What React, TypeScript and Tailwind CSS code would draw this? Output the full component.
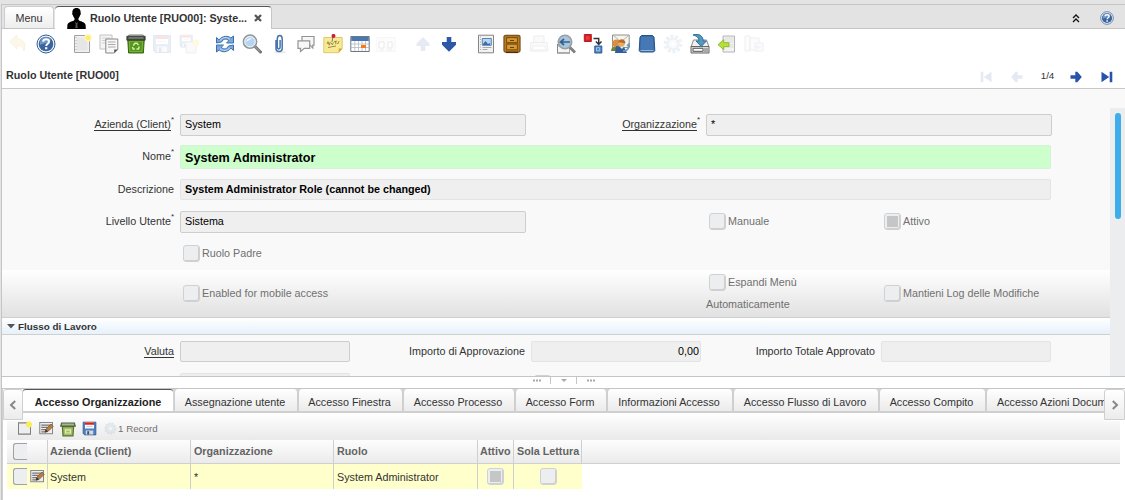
import React from 'react';

type Children = { children?: React.ReactNode };

function Icon({ children, dim, size = 20 }: Children & { dim?: boolean; size?: number }) {
  return (
    <svg width={size} height={size} viewBox="0 0 20 20" fill="none" className={dim ? 'shrink-0 opacity-12' : 'shrink-0'}>
      {children}
    </svg>
  );
}

function Help({ size = 20 }: { size?: number }) {
  return (
    <Icon size={size}>
      <circle cx="10" cy="10" r="9" fill="#f4f7fb" stroke="#315b91" strokeWidth="1" />
      <circle cx="10" cy="10" r="7.3" fill="#38659f" />
      <path d="M4 8a6 6 0 0 1 11-2c-2 3-6 3-11 5z" fill="#7296c4" />
      <path d="M7.2 7.6C7.3 4.6 13 4.6 13 7.7c0 2-2.8 2-2.8 4.2" stroke="#fff" strokeWidth="2" />
      <path d="M9.1 13.2h2.2v2.1H9.1z" fill="#fff" />
    </Icon>
  );
}

function Floppy() {
  return (
    <>
      <path d="M1.5 1.5h17v17h-15l-2-2z" fill="#4d7fc0" stroke="#2c5591" />
      <path d="M4 2h12v8H4z" fill="#fff" />
      <path d="M4 2h12v3H4z" fill="#e02020" />
      <path d="M6 7.5h8" stroke="#bbb" />
      <path d="M5 12.5h10V18H5z" fill="#d5d8dc" />
      <path d="M7 13.5h2.5V18H7z" fill="#31537f" />
    </>
  );
}

function Bin() {
  return (
    <Icon>
      <path d="M1.8 6h16.4l-.8 13H2.6z" fill="#57961c" stroke="#36630f" />
      <path d="M3.4 7.2h13.2L16 17.6H4z" stroke="#82bb43" strokeWidth=".8" />
      <path d="M2 2.2 3 .8h14l1 1.4z" fill="#c6cbbc" stroke="#777b70" strokeWidth=".6" />
      <path d="M.8 2.2h18.4v4H.8z" fill="#474b43" stroke="#32352f" strokeWidth=".7" />
      <path d="M2.5 4h15" stroke="#8a9183" strokeWidth="1.2" />
      <path d="m7.2 11.5 1.8-2.3h2l1.5 2M13.2 12.5l-.7 2.5h-2M8.8 15H7.2l-.8-2" stroke="#d4efae" strokeWidth="1.4" />
    </Icon>
  );
}

function Bubble({ d }: { d: string }) {
  return <path d={d} fill="#f7f7f7" stroke="#949494" strokeWidth="1.2" />;
}

const Gap = () => <div className="w-[9.4px] shrink-0" />;
const Slot = ({ children }: Children) => <div className="flex h-5 w-[26.83px] shrink-0 items-center justify-center">{children}</div>;

function Toolbar() {
  return (
    <div className="flex h-[34px] shrink-0 items-center pb-[5px] pl-[3.4px] pr-2">
      <Slot>
        <Icon dim>
          <path d="M1 7.5 8 1v4c6 0 9 3 7 12-1-4-3-5.5-7-5.5V15z" fill="#eac53a" stroke="#c79a14" />
        </Icon>
      </Slot>
      <Slot><Help /></Slot>
      <Gap />
      <Slot>
        <Icon>
          <path d="M2.5 1.5h15v17h-15z" fill="#f1f1f1" stroke="#a2a2a2" />
          <path d="M4.5 3.5h11v13h-11z" fill="#e6e6e6" />
          <path d="M4 3v14" stroke="#aaa" strokeDasharray="1 2" />
          <circle cx="16" cy="3.8" r="3.8" fill="#fff7ab" />
          <circle cx="16" cy="3.8" r="2" fill="#fbe14c" />
          <circle cx="16" cy="3.8" r=".8" fill="#fff" />
        </Icon>
      </Slot>
      <Slot>
        <Icon>
          <path d="M1 1h12v14H1z" fill="#f5f5f5" stroke="#c2c2c2" />
          <path d="M3 4h8M3 6.5h8M3 9h8" stroke="#d0d0d0" />
          <path d="M6.8 5h12v10.5l-3.5 3.5H6.8z" fill="#f7f7f7" stroke="#888" />
          <path d="M9 8h7.5M9 10.5h7.5M9 13h7.5" stroke="#aaa" />
          <path d="M15.2 19v-3.5h3.6z" fill="#555" />
        </Icon>
      </Slot>
      <Slot><Bin /></Slot>
      <Slot><Icon dim><Floppy /></Icon></Slot>
      <Slot>
        <Icon dim>
          <g transform="scale(.72)"><Floppy /></g>
          <path d="M7 8h10v11H7z" fill="#ddd" stroke="#888" />
          <circle cx="17" cy="9" r="3.5" fill="#f3d41c" />
        </Icon>
      </Slot>
      <Gap />
      <Slot>
        <Icon>
          <path d="M1.5 9V3.5L4 5.8C8 1.5 13 1.5 15.8 4L18.5 2v7h-7l2.3-2.3C11 4 8 5 6.5 8z" fill="#7ba7da" stroke="#3a70af" strokeWidth="1" />
          <path d="M18.5 11v5.5L16 14.2C12 18.5 7 18.5 4.2 16L1.5 18v-7h7l-2.3 2.3C9 16 12 15 13.5 12z" fill="#7ba7da" stroke="#3a70af" strokeWidth="1" />
          <path d="M5 6.4C8 3 12 2.8 15 5.2M15 13.6C12 17 8 17.2 5 14.8" stroke="#c4dcf4" strokeWidth="1" />
        </Icon>
      </Slot>
      <Slot>
        <Icon>
          <path d="m12.5 12 6 6" stroke="#707070" strokeWidth="3" strokeLinecap="round" />
          <path d="m13 12.5 5 5" stroke="#b4b4b4" strokeWidth="1" />
          <circle cx="8" cy="7.7" r="6.6" fill="#b7d4f2" stroke="#959595" strokeWidth="1.5" />
          <circle cx="8" cy="7.7" r="5.2" stroke="#eff6fd" />
          <path d="M4.2 8c.3-3 3-4.5 6-3.6-2 1-4 2-6 3.6z" fill="#eef6ff" />
        </Icon>
      </Slot>
      <Slot>
        <Icon>
          <ellipse cx="11" cy="18.3" rx="6" ry="1" fill="#e8e8e8" />
          <path d="M7 6v8.5c0 4 6.2 4 6.2 0V5c0-4.7-4.9-4.7-4.9 0v8.3c0 2.1 2.8 2.1 2.8 0V6" stroke="#4674b0" strokeWidth="1.5" />
        </Icon>
      </Slot>
      <Slot>
        <Icon>
          <Bubble d="M6 2.5h12v8.7h-1.2V14L14 11.2H6z" />
          <Bubble d="M2 6.8h11.7v7.6H8.3l-3.8 3v-3H2z" />
        </Icon>
      </Slot>
      <Slot>
        <Icon>
          <path d="M.8 3.5h18.4v11l-3.5 4.2H.8z" fill="#f8ea94" stroke="#e0c868" />
          <path d="M15.7 18.7v-4.2h3.5z" fill="#cba83b" />
          <path d="m4 10 1-2.3 1.3 3.5 1-3.3M8.2 8.8l1.2 2 1-2.3M11 7.7l3-.6m-1.5 0 .4 3.2M14 9l1 .7 1-2.5M5 13.5l8-1.5" stroke="#8f803c" strokeWidth=".9" />
          <path d="m10 2.8-1 5" stroke="#777" />
          <circle cx="10.5" cy="1.9" r="2" fill="#c82035" />
        </Icon>
      </Slot>
      <Slot>
        <Icon>
          <path d="M.8 2.5h18.4v15H.8z" fill="#fff" stroke="#6b7785" />
          <path d="M1.2 3h17.6v4H1.2z" fill="#4b77b0" />
          <path d="M1 10h18M1 13.5h18M4.8 7v10M8.5 7v10M12 7v10M15.5 7v10" stroke="#b5bbc3" strokeWidth=".8" />
          <path d="M11 11h5v3h-5z" fill="#f47b16" />
        </Icon>
      </Slot>
      <Slot>
        <Icon dim>
          <path d="M.8 3.5h18.4v14H.8z" fill="#eee" stroke="#999" strokeWidth=".6" />
          <path d="M3 8h5v6H3zM12 8h4v6h-4z" fill="#fff" stroke="#555" />
          <path d="M4 16h4m3 0h5" stroke="#777" />
        </Icon>
      </Slot>
      <Gap />
      <Slot><Icon dim><path d="M10 3 3.5 9.5V12h4.2v5h4.6v-5h4.2V9.5z" fill="#3458a8" /></Icon></Slot>
      <Slot><Icon><path d="M7.7 3h4.6v5h4.7v2.8L10 17.8 3 10.8V8h4.7z" fill="#2d58a8" /></Icon></Slot>
      <Gap />
      <Slot>
        <Icon>
          <path d="M2.5 1.2h15v17.6h-15z" fill="#f2f2f2" stroke="#858585" />
          <path d="M4.5 2.5v15" stroke="#aaa" strokeDasharray="1 1.5" />
          <path d="M6.3 4.5h9v6.8h-9z" fill="#b9d5ef" stroke="#5883b4" />
          <path d="m7 10 2.5-3 2.5 3 2-1v2H7z" fill="#3a6da9" />
          <path d="M6.5 13.5h9m-9 2h5" stroke="#aaa" />
        </Icon>
      </Slot>
      <Slot>
        <Icon>
          <rect x="2" y="1.5" width="16" height="16.5" rx="1.5" fill="#c08122" stroke="#7d531a" strokeWidth="1.3" />
          <path d="M4.5 3.7h11v5h-11zm0 6.5h11v5.6h-11z" fill="#d8982d" stroke="#80530f" strokeWidth="1.2" />
          <path d="M8 6.2h4m-4 7h4" stroke="#664211" strokeWidth="1.7" />
          <path d="M8 5.3h4m-4 7h4" stroke="#f2d175" strokeWidth=".7" />
          <path d="M4 18.5h12" stroke="#49300e" strokeWidth="1.2" />
        </Icon>
      </Slot>
      <Slot>
        <Icon dim>
          <path d="M5 9V2h10v7M2 8.5h16l1 8.5H1z" fill="#ddd" stroke="#777" />
          <path d="M4 12h12l1 4H3z" fill="#fff" stroke="#888" />
        </Icon>
      </Slot>
      <Slot>
        <Icon>
          <path d="M1.5 12h12v7h-12z" fill="#f5f5f5" stroke="#aaa" />
          <path d="M1.5 18V10M1 19h13" stroke="#888" />
          <path d="m13 12.5 6 6" stroke="#808080" strokeWidth="2.8" />
          <circle cx="9" cy="8" r="6.7" fill="#a9c5de" stroke="#999ea1" strokeWidth="1.6" />
          <path d="M14 8H5m3-3L4.5 8 8 11" stroke="#31638e" strokeWidth="1.7" />
        </Icon>
      </Slot>
      <Slot>
        <Icon>
          <path d="M1.3.5h7v7h-7z" fill="#d91b23" stroke="#b42020" />
          <path d="M3 2.2h3.5v3.5H3z" fill="#ee3a3c" />
          <path d="M10.5 4.5h5.2v5.7m-2.8-2.7 2.8 3 2.8-3" stroke="#333" strokeWidth="1.5" />
          <path d="M11.8 12h7v7h-7z" fill="#4a84be" stroke="#285f9c" />
          <path d="M13.5 13.7h3.2v3.2h-3.2z" stroke="#a6c7ea" />
        </Icon>
      </Slot>
      <Slot>
        <Icon>
          <path d="M2.5 1h16.7v12.5H2.5z" fill="#f4f4ef" stroke="#90928e" />
          <path d="m3 1 8 7 8-7" stroke="#b4b4ad" />
          <path d="M1 17c0-4 3-5 6-4l4 4z" fill="#6f842d" />
          <circle cx="6.5" cy="9.5" r="4" fill="#d98e43" />
          <path d="m6 12 8 1 3 6H5z" fill="#315d9b" />
          <path d="M9.5 12.5 12 15l2-2.5" fill="#eee" />
          <circle cx="11.5" cy="9.3" r="3.4" fill="#e4ad63" />
          <path d="M7.8 9c1-5 7-5 7.7 0-3 1-5-2-7.7 0z" fill="#b96c2b" />
          <path d="M13 17c4 0 6-2 6-6m-2 1 2-2 1 3" stroke="#6c9ac9" strokeWidth="1.7" />
        </Icon>
      </Slot>
      <Slot>
        <Icon>
          <path d="m3 3 1.5-1.5h11L17 3l.8 13.5-1.2 1.5H3.4l-1.2-1.5z" fill="#376ba9" stroke="#275386" />
          <path d="M4 3h12l.5 12.5h-13z" fill="#4578b4" />
          <path d="M3.5 16.5h13" stroke="#97b7d8" strokeWidth="1.2" />
        </Icon>
      </Slot>
      <Slot>
        <Icon dim>
          <circle cx="10" cy="10" r="7.7" stroke="#6f9ac4" strokeWidth="3.3" strokeDasharray="3 1.8" />
          <circle cx="10" cy="10" r="5.5" fill="#c7d9eb" stroke="#6f9ac4" strokeWidth="2" />
          <circle cx="10" cy="10" r="2" fill="#fff" />
        </Icon>
      </Slot>
      <Slot>
        <Icon>
          <path d="M3.5 6h13l2.5 7H1z" fill="#f0f0f0" stroke="#888" />
          <path d="M1 12.5h18V19H1z" fill="#ddd" stroke="#666" />
          <path d="M3 14.3h10v3H3z" fill="#fff" stroke="#555" />
          <path d="M15 14v4m2-4v4" stroke="#777" />
          <path d="M3 1c6-2 10 1 10.3 6h3l-5 5.5L6 7h3C9 4 7 2 3 1z" fill="#5597c0" stroke="#287398" />
        </Icon>
      </Slot>
      <Slot>
        <Icon>
          <path d="M6 2h11.5v16H6z" fill="#f3f3f3" stroke="#b4b4b4" />
          <path d="M7.5 4h9m-9 2h9m-9 2h9m-5 3h5m-5 2h5" stroke="#ddd" />
          <path d="M6.8 5.7v3H12v4H6.8v3L1 10.7z" fill="#b8df37" stroke="#92bb35" />
        </Icon>
      </Slot>
      <Slot>
        <Icon dim>
          <path d="M1 2h5v15H1zM6 4h9v12H6z" fill="#eee" stroke="#888" />
          <path d="M11 9h8v8h-8z" fill="#dce4ef" stroke="#7488a4" />
          <path d="M17 13h-5m2-2-2 2 2 2" stroke="#7488a4" />
        </Icon>
      </Slot>
    </div>
  );
}

function Arrow({ left, end, dim }: { left?: boolean; end?: boolean; dim?: boolean }) {
  return (
    <svg width="12" height="12" viewBox="0 0 12 12" className={dim ? 'opacity-12' : ''}>
      <g transform={left ? 'translate(12 0) scale(-1 1)' : undefined} fill="#2853ad">
        {end ? <path d="M.5.7 8.2 6 .5 11.3zM8.7.7h2.6v10.6H8.7z" /> : <path d="M.5 4.3h4.8V.8h2l4.5 5.2-4.5 5.2h-2V7.7H.5z" />}
      </g>
    </svg>
  );
}

function Label({ text, req, link, className = '' }: { text: string; req?: boolean; link?: boolean; className?: string }) {
  return (
    <div className={`flex shrink-0 items-center justify-end text-[#333] ${className}`}>
      <span className={link ? 'border-b border-[#333] leading-[11px]' : 'pb-[2px] leading-[12px]'}>{text}</span>
      {req && <span className="-mt-2.5 text-[8px] leading-[8px]">*</span>}
    </div>
  );
}

function Box({ children, strong, className = '' }: Children & { strong?: boolean; className?: string }) {
  return (
    <div className={`flex shrink-0 items-center rounded-[2px] border bg-[#efefef] px-1 pb-[2px] text-black ${strong ? 'border-[#cdcdcd]' : 'border-[#e4e4e4]'} ${className}`}>
      {children}
    </div>
  );
}

function Check({ on }: { on?: boolean }) {
  return (
    <span className="inline-flex size-[17px] shrink-0 items-center justify-center rounded-[3px] border border-[#cfd1d3] bg-[#eceef0] shadow-[inset_-1px_-1px_0_#cfcfcf]">
      {on && <span className="size-[11px] bg-[#c5c6c8]" />}
    </span>
  );
}

function CheckField({ label, on, className = '' }: { label: string; on?: boolean; className?: string }) {
  return (
    <div className={`flex shrink-0 items-center gap-[2px] text-[#707070] ${className}`}>
      <Check on={on} />
      <span className="pb-[2px]">{label}</span>
    </div>
  );
}

function Form() {
  return (
    <div className="flex h-[287px] shrink-0 overflow-hidden bg-[#f9f9f9]">
      <div className="flex w-[1108px] shrink-0 flex-col">
        <div className="mt-[25px] flex h-[22px] shrink-0">
          <Label text="Azienda (Client)" req link className="w-[172px]" />
          <Box strong className="ml-[6px] w-[346px]">System</Box>
          <Label text="Organizzazione" req link className="w-[174px]" />
          <Box strong className="ml-[6px] w-[346px]">*</Box>
        </div>
        <div className="mt-[9px] flex h-[24px] shrink-0">
          <Label text="Nome" req className="w-[172px]" />
          <div className="ml-[6px] flex w-[871px] items-center rounded-[2px] border border-[#d9efd9] bg-[#ccffcc] px-1 pt-px text-[12.6px] font-bold text-black">System Administrator</div>
        </div>
        <div className="mt-[10px] flex h-[21px] shrink-0">
          <Label text="Descrizione" className="w-[172px]" />
          <Box className="ml-[6px] w-[871px] font-bold">System Administrator Role (cannot be changed)</Box>
        </div>
        <div className="mt-[11px] flex h-[22px] shrink-0">
          <Label text="Livello Utente" req className="w-[172px]" />
          <Box strong className="ml-[6px] w-[346px]">Sistema</Box>
          <CheckField label="Manuale" className="ml-[183px] w-[175px] pb-px" />
          <CheckField label="Attivo" on className="pb-px" />
        </div>
        <div className="mt-[12px] flex h-[17px] shrink-0">
          <CheckField label="Ruolo Padre" className="ml-[181px]" />
        </div>
        <div className="mt-[8px] flex h-[48px] shrink-0 items-center border-b border-[#cfcfcf] bg-linear-to-b from-white to-[#e1e1e1]">
          <CheckField label="Enabled for mobile access" className="ml-[181px] w-[523px]" />
          <div className="w-[178px] shrink-0 pb-[3px] text-[#707070]">
            <CheckField label="Espandi Menù" className="pl-[3px]" />
            <div className="pt-[7px] leading-[12px]">Automaticamente</div>
          </div>
          <CheckField label="Mantieni Log delle Modifiche" />
        </div>
        <div className="flex h-[17px] shrink-0 items-center border-b border-[#cfcfcf] bg-linear-to-b from-white to-[#e6f1fb] pl-[5px] text-[9.85px] font-bold text-[#333]">
          <svg width="8" height="5" viewBox="0 0 8 5" className="mr-[3px]"><path d="M0 0h8L4 4.5z" fill="#555" /></svg>
          <span className="pt-[2px]">Flusso di Lavoro</span>
        </div>
        <div className="mt-[6px] flex h-[21px] shrink-0">
          <Label text="Valuta" link className="w-[172px]" />
          <Box strong className="ml-[6px] w-[170px]" />
          <Label text="Importo di Approvazione" className="w-[175px]" />
          <Box className="ml-[6px] w-[170px] justify-end pr-[1px]!">0,00</Box>
          <Label text="Importo Totale Approvato" className="w-[174px]" />
          <Box className="ml-[6px] w-[170px]" />
        </div>
        <div className="mt-[11px] flex h-[21px] shrink-0">
          <Box className="ml-[178px] w-[170px]" />
          <div className="mt-[2px] ml-[184px]"><Check /></div>
        </div>
      </div>
      <div className="mt-[19px] flex w-[15px] shrink-0 bg-[#ebedef] pt-[5px] pl-[5px]">
        <div className="h-[106px] w-[6px] rounded-full bg-[#3daee9]" />
      </div>
    </div>
  );
}

const TABS = [
  { label: 'Assegnazione utente', w: 'w-[124px]' },
  { label: 'Accesso Finestra', w: 'w-[105px]' },
  { label: 'Accesso Processo', w: 'w-[112px]' },
  { label: 'Accesso Form', w: 'w-[92px]' },
  { label: 'Informazioni Accesso', w: 'w-[126px]' },
  { label: 'Accesso Flusso di Lavoro', w: 'w-[146px]' },
  { label: 'Accesso Compito', w: 'w-[107px]' },
];

function DetailTabs() {
  return (
    <div className="flex h-[32px] shrink-0">
      <div className="flex h-[31px] w-[20px] shrink-0 items-center justify-center rounded-t-[3px] border border-[#cfcfcf] bg-linear-to-b from-white to-[#ececec]">
        <svg width="8" height="10" viewBox="0 0 8 10" className="mt-px"><path d="M6.2 1 2 5l4.2 4" fill="none" stroke="#888" strokeWidth="2" /></svg>
      </div>
      <div className="flex h-[24px] min-w-0 flex-1 overflow-hidden border-b-2 border-[#cfcfcf] bg-[#d4d4d4]">
        <div className="mr-px -mb-[2px] flex h-[24px] w-[150px] shrink-0 items-center justify-center rounded-t-[3px] border-t border-[#555] bg-white text-[10.8px] font-bold text-[#222]">Accesso Organizzazione</div>
        {TABS.map((t) => (
          <div key={t.label} className={`flex h-[22px] shrink-0 items-center justify-center rounded-t-[4px] border-x border-[#cfcfcf] bg-linear-to-b from-white to-[#ebebeb] pt-[3px] pr-[2px] text-[#333] ${t.w}`}>{t.label}</div>
        ))}
        <div className="flex h-[22px] w-[140px] shrink-0 items-center rounded-tl-[4px] border-l border-[#cfcfcf] bg-linear-to-b from-white to-[#ebebeb] pt-[3px] pl-[10px] whitespace-nowrap text-[#333]">Accesso Azioni Documento</div>
      </div>
      <div className="flex h-[31px] w-[21px] shrink-0 items-center justify-center rounded-t-[3px] border border-[#cfcfcf] bg-linear-to-b from-white to-[#ececec]">
        <svg width="8" height="10" viewBox="0 0 8 10" className="mt-px"><path d="M1.8 1 6 5 1.8 9" fill="none" stroke="#888" strokeWidth="2" /></svg>
      </div>
    </div>
  );
}

function Edit() {
  return (
    <Icon size={15}>
      <path d="M1 2h17v15H1z" fill="#eee" stroke="#888" strokeWidth="1.4" />
      <path d="M3 5.5h12M3 8.5h9M3 11.5h7M3 14.5h6" stroke="#777" strokeWidth="1.5" />
      <path d="m8 15 1-4 7-7 3 3-7 7z" fill="#c07a3a" stroke="#6a5b4e" />
      <path d="m8 15 1-4 3 3z" fill="#333" />
    </Icon>
  );
}

function HalfCheck() {
  return <span className="block h-[17px] w-[14px] shrink-0 rounded-l-[3px] border border-r-0 border-[#9ea1a5] bg-[#eceef0]" />;
}

export default function App() {
  return (
    <div className="flex h-[500px] w-[1125px] flex-col overflow-hidden bg-[#e4e4e4] font-['Liberation_Sans',Arial,sans-serif] text-[10.75px] leading-[14px]">
      <div className="h-[4px] shrink-0" />
      <div className="ml-px flex h-[496px] flex-col border-t border-l border-[#c5c5c5] bg-white">
        <div className="flex h-[24px] shrink-0 border-b border-[#c5c5c5] bg-[#e3e3e3] pl-[2px]">
          <div className="mt-px flex w-[50px] items-center justify-center rounded-t-[4px] border border-b-0 border-[#cdcdcd] bg-linear-to-b from-white to-[#eeeeee] text-[#333]">Menu</div>
          <div className="mt-px -mb-px ml-px flex h-[23px] w-[217px] items-center rounded-t-[4px] border-t border-r border-t-[#555] border-r-[#c5c5c5] bg-white pl-[12px] font-bold text-[#333]">
            <svg width="19" height="21" viewBox="0 0 19 21" className="mr-[4px] shrink-0">
              <path d="M9.5 0C6.4 0 5.1 2.2 5.4 5c-.4.2-.3 1.8.5 2.2.4 1.6 1 2.4 1.6 3v1.6c-1 2-6.5 1.6-7.1 5.2L.2 21h18.6l-.2-4c-.6-3.6-6.1-3.2-7.1-5.2v-1.6c.6-.6 1.2-1.4 1.6-3 .8-.4.9-2 .5-2.2.3-2.8-1-5-4.1-5z" fill="#000" />
              <path d="m8.2 14 1.3 1 1.3-1-.5 3 .4 3H8.3l.4-3z" fill="#555" />
            </svg>
            <span className="shrink-0 whitespace-nowrap">Ruolo Utente [RUO00]: Syste...</span>
            <svg width="8" height="8" viewBox="0 0 8 8" className="ml-[7px] shrink-0"><path d="m1 1 6 6m0-6L1 7" stroke="#555" strokeWidth="2.3" /></svg>
          </div>
          <div className="flex-1" />
          <svg width="8" height="9" viewBox="0 0 8 9" className="mt-[9px] mr-[20px]"><path d="m1 4 3-3 3 3M1 8l3-3 3 3" fill="none" stroke="#111" strokeWidth="1.3" /></svg>
          <div className="mt-[6px] mr-[11px]"><Help size={14} /></div>
        </div>
        <Toolbar />
        <div className="flex h-[26px] shrink-0 items-center border-b border-[#c8c8c8] pl-[4px]">
          <span className="pb-[2px] font-bold text-[#333]">Ruolo Utente [RUO00]</span>
          <div className="flex-1" />
          <div className="mt-[2px] flex items-center text-[9.75px] text-[#333]">
            <Arrow left end dim />
            <span className="w-[19px]" />
            <Arrow left dim />
            <span className="w-[47px] pb-[2px] pl-[2px] text-center">1/4</span>
            <Arrow />
            <span className="w-[19px]" />
            <Arrow end />
            <span className="w-[12px]" />
          </div>
        </div>
        <Form />
        <div className="flex h-[13px] shrink-0 justify-center border-t border-b border-[#c5c5c5] bg-white text-[#999]">
          <div className="flex h-[7px] items-center">
            <svg width="8" height="3"><path d="M0 1.5h8" stroke="#aaa" strokeWidth="2" strokeDasharray="2 1" /></svg>
            <span className="ml-[9px] h-full w-px bg-[#c5c5c5]" />
            <svg width="25" height="5"><path d="M10 1h6l-3 3z" fill="#aaa" /></svg>
            <span className="mr-[10px] h-full w-px bg-[#c5c5c5]" />
            <svg width="8" height="3"><path d="M0 1.5h8" stroke="#aaa" strokeWidth="2" strokeDasharray="2 1" /></svg>
          </div>
        </div>
        <div className="flex h-[112px] flex-col border-l border-[#d0d0d0]">
          <DetailTabs />
          <div className="-mt-[8px] mr-[5px] ml-[4px] flex h-[27px] shrink-0 items-center bg-linear-to-b from-white to-[#eaeaea] pt-[4px] pl-[10px] [clip-path:polygon(16px_0,1097px_0,1097px_8px,100%_8px,100%_100%,0_100%,0_8px,16px_8px)]">
            <Icon size={15}>
              <path d="M2 2.5h16v15H2z" fill="#eee" stroke="#808080" strokeWidth="1.4" />
              <circle cx="16" cy="4.5" r="4" fill="#f8ef53" />
            </Icon>
            <span className="w-[7px]" />
            <Edit />
            <span className="w-[6px]" />
            <Icon size={16}>
              <path d="M3 7h14l-.8 11.5H3.8z" fill="#a6bc67" stroke="#52702a" strokeWidth="1.5" />
              <path d="M2 2.5h16l1 4H1z" fill="#a8b596" stroke="#486336" strokeWidth="1.5" />
              <path d="M7 11h6v4H7z" stroke="#e2edba" strokeWidth="1.5" />
            </Icon>
            <span className="w-[6px]" />
            <Icon size={15}><Floppy /></Icon>
            <span className="w-[7px]" />
            <svg width="13" height="13" viewBox="0 0 13 13" className="opacity-20">
              <circle cx="6.5" cy="6.5" r="5" fill="#a8bfd5" stroke="#789cc0" strokeWidth="2" strokeDasharray="2 1" />
              <circle cx="6.5" cy="6.5" r="1.5" fill="#fff" />
            </svg>
            <span className="ml-px text-[9.75px] text-[#707070]">1 Record</span>
          </div>
          <div className="mr-[5px] ml-[4px] flex h-[24px] shrink-0 border-b border-[#cfcfcf] bg-linear-to-b from-[#fdfdfd] to-[#ebebeb] font-bold text-[#636363] *:flex *:shrink-0 *:items-center *:border-r *:border-[#cfcfcf]">
            <div className="w-[41px] pb-px pl-[6px]"><HalfCheck /></div>
            <div className="w-[143px] pb-px pl-[2px]">Azienda (Client)</div>
            <div className="w-[143px] pb-px pl-[3px]">Organizzazione</div>
            <div className="w-[144px] pb-px pl-[3px]">Ruolo</div>
            <div className="w-[36px] pb-px pl-[2px]">Attivo</div>
            <div className="w-[68px] pb-px pl-[3px] whitespace-nowrap">Sola Lettura</div>
          </div>
          <div className="ml-[4px] flex h-[25px] w-[575px] shrink-0 bg-[#ffffcc] text-[#333] *:flex *:shrink-0 *:items-center *:border-r *:border-[#cfcfcf]">
            <div className="w-[41px] gap-[3px] pl-[6px]"><HalfCheck /><Edit /></div>
            <div className="w-[143px] pl-[2px]">System</div>
            <div className="w-[143px] pl-[3px]">*</div>
            <div className="w-[144px] pl-[3px]">System Administrator</div>
            <div className="w-[36px] justify-center"><Check on /></div>
            <div className="w-[68px] justify-center border-r-0!"><Check /></div>
          </div>
        </div>
      </div>
    </div>
  );
}
